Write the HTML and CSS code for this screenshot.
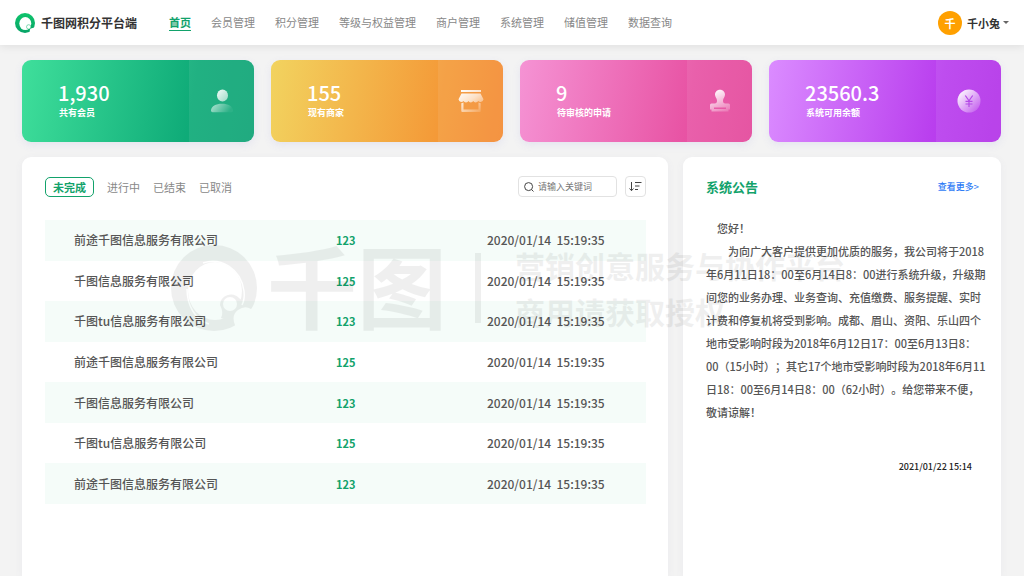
FILE: index.html
```html
<!DOCTYPE html>
<html lang="zh-CN">
<head>
<meta charset="utf-8">
<meta name="viewport" content="width=device-width, initial-scale=1">
<title>千图网积分平台端</title>
<link rel="stylesheet" href="styles.css">
</head>
<body>
<header class="topbar">
  <a class="brand" href="#">
    <svg class="brand-logo" viewBox="0 0 20 20" aria-hidden="true">
      <defs><linearGradient id="logo" x1="0" y1="0" x2="0" y2="1"><stop offset="0" stop-color="#0fc46c"/><stop offset="1" stop-color="#07a367"/></linearGradient></defs>
      <circle cx="10" cy="10" r="10" fill="url(#logo)"/>
      <ellipse cx="10.300" cy="10.600" rx="6" ry="6.500" fill="#fff"/>
      <circle cx="13.700" cy="13.900" r="2.200" fill="#fff" stroke="#0ab269" stroke-width=".5"/>
      <path d="M14.800 20V17Q14.800 15.800 16.500 15.300L20 14.600V20Z" fill="#fff"/>
    </svg>
    <span>千图网积分平台端</span>
  </a>
  <nav class="nav">
    <a class="nav-link active" href="#">首页</a>
    <a class="nav-link" href="#">会员管理</a>
    <a class="nav-link" href="#">积分管理</a>
    <a class="nav-link" href="#">等级与权益管理</a>
    <a class="nav-link" href="#">商户管理</a>
    <a class="nav-link" href="#">系统管理</a>
    <a class="nav-link" href="#">储值管理</a>
    <a class="nav-link" href="#">数据查询</a>
  </nav>
  <button class="user" type="button">
    <span class="avatar">千</span>
    <span>千小兔</span>
    <svg class="caret" viewBox="0 0 6 3" aria-hidden="true"><path d="M0 0H6L3 3Z" fill="#666"/></svg>
  </button>
</header>

<main class="page">
  <section class="stats">
    <article class="stat green">
      <div class="stat-text"><strong>1,930</strong><span>共有会员</span></div>
      <div class="stat-side">
        <svg class="stat-icon" viewBox="0 0 24 24" aria-hidden="true">
          <defs>
            <linearGradient id="head" x1="0" y1="0" x2="1" y2="1"><stop offset="0" stop-color="#fff" stop-opacity=".95"/><stop offset="1" stop-color="#fff" stop-opacity=".55"/></linearGradient>
            <linearGradient id="torso" x1="0" y1="0" x2="1" y2=".3"><stop offset="0" stop-color="#fff" stop-opacity=".65"/><stop offset="1" stop-color="#fff" stop-opacity=".05"/></linearGradient>
          </defs>
          <ellipse cx="12.500" cy="6.500" rx="5.500" ry="6" fill="url(#head)"/>
          <path d="M1 21.500C1 17.500 6 14.800 12 14.800S23 17.500 23 21.500Q23 23.300 21.500 23.300H2.500Q1 23.300 1 21.500Z" fill="url(#torso)"/>
        </svg>
      </div>
    </article>
    <article class="stat orange">
      <div class="stat-text"><strong>155</strong><span>现有商家</span></div>
      <div class="stat-side">
        <svg class="stat-icon wide" viewBox="0 0 26 24" aria-hidden="true">
          <defs><linearGradient id="shop" gradientUnits="userSpaceOnUse" x1="3" y1="0" x2="20" y2="24"><stop offset="0" stop-color="#fff"/><stop offset=".5" stop-color="#fff" stop-opacity=".7"/><stop offset="1" stop-color="#fff" stop-opacity=".15"/></linearGradient></defs>
          <g fill="url(#shop)">
            <rect x="3" y="1" width="20" height="2"/>
            <path d="M3.500 4.500H22.500L25.500 10.200Q25 13 22.800 13Q20.800 13 20.300 12Q19.500 13.400 17.600 13.400Q15.800 13.400 15.300 12Q14.500 13.400 12.800 13.400Q11 13.400 10.500 12Q9.800 13.400 8 13.400Q6.200 13.400 5.500 12Q5 13 3 13Q1 13 .500 10.200Z"/>
            <path d="M3.300 14.200L5.500 13.600V20.500H20.500V13.600L22.700 14.200V22Q22.700 23 21.700 23H4.300Q3.300 23 3.300 22Z"/>
          </g>
        </svg>
      </div>
    </article>
    <article class="stat pink">
      <div class="stat-text"><strong>9</strong><span>待审核的申请</span></div>
      <div class="stat-side">
        <svg class="stat-icon" viewBox="0 0 24 24" aria-hidden="true">
          <defs><linearGradient id="stamp" gradientUnits="userSpaceOnUse" x1="8" y1="0" x2="19" y2="24"><stop offset="0" stop-color="#fff"/><stop offset="1" stop-color="#fff" stop-opacity=".15"/></linearGradient></defs>
          <path fill="url(#stamp)" fill-rule="evenodd" d="M12 .800C15 .800 17 3 17 5.800C17 8.200 15 9.300 15 11.800C15 13.800 15.800 14.500 17.200 14.500H20.500Q22 14.500 22 16V20.500H20.500V22.500H3.500V20.500H2V16Q2 14.500 3.500 14.500H6.800C8.200 14.500 9 13.800 9 11.800C9 9.300 7 8.200 7 5.800C7 3 9 .800 12 .800ZM6 18.500V20H18V18.500Z"/>
        </svg>
      </div>
    </article>
    <article class="stat purple">
      <div class="stat-text"><strong>23560.3</strong><span>系统可用余额</span></div>
      <div class="stat-side">
        <svg class="stat-icon" viewBox="0 0 24 24" aria-hidden="true">
          <defs><linearGradient id="coin" x1="0" y1="0" x2="1" y2="1"><stop offset=".1" stop-color="#fff" stop-opacity=".95"/><stop offset=".9" stop-color="#fff" stop-opacity=".15"/></linearGradient></defs>
          <circle cx="12" cy="12" r="11.500" fill="url(#coin)"/>
          <path d="M8.300 6.500L12 11.800L15.700 6.500M12 11.800V18M8.500 12.300H15.500M8.500 15H15.500" fill="none" stroke="#b44be6" stroke-width="1.200"/>
        </svg>
      </div>
    </article>
  </section>

  <div class="columns">
    <section class="panel orders">
      <div class="toolbar">
        <div class="tabs">
          <button class="tab active" type="button">未完成</button>
          <button class="tab" type="button">进行中</button>
          <button class="tab" type="button">已结束</button>
          <button class="tab" type="button">已取消</button>
        </div>
        <label class="search">
          <svg class="search-icon" viewBox="0 0 10 10" aria-hidden="true"><circle cx="4.600" cy="4.600" r="4" fill="none" stroke="#444"/><path d="M7.500 7.500L9.500 9.500" stroke="#444"/></svg>
          <input class="search-input" type="search" placeholder="请输入关键词" aria-label="请输入关键词">
        </label>
        <button class="sort" type="button" aria-label="排序">
          <svg class="sort-icon" viewBox="0 0 13 11" aria-hidden="true"><path d="M2.500 1V9.500M.500 7.500L2.500 9.700L4.500 7.500M6 1.500H12.500M6 5H10.500M6 8.500H9" fill="none" stroke="#444"/></svg>
        </button>
      </div>
      <table class="list">
        <tbody>
          <tr><td class="company">前途千图信息服务有限公司</td><td class="count">123</td><td class="time">2020/01/14  15:19:35</td></tr>
          <tr><td class="company">千图信息服务有限公司</td><td class="count">125</td><td class="time">2020/01/14  15:19:35</td></tr>
          <tr><td class="company">千图tu信息服务有限公司</td><td class="count">123</td><td class="time">2020/01/14  15:19:35</td></tr>
          <tr><td class="company">前途千图信息服务有限公司</td><td class="count">125</td><td class="time">2020/01/14  15:19:35</td></tr>
          <tr><td class="company">千图信息服务有限公司</td><td class="count">123</td><td class="time">2020/01/14  15:19:35</td></tr>
          <tr><td class="company">千图tu信息服务有限公司</td><td class="count">125</td><td class="time">2020/01/14  15:19:35</td></tr>
          <tr><td class="company">前途千图信息服务有限公司</td><td class="count">123</td><td class="time">2020/01/14  15:19:35</td></tr>
        </tbody>
      </table>
    </section>

    <aside class="panel notice">
      <div class="notice-head">
        <h2>系统公告</h2>
        <a class="more" href="#">查看更多&gt;</a>
      </div>
      <div class="notice-body">
        <p class="greeting">您好！</p>
        <p class="message">为向广大客户提供更加优质的服务，我公司将于2018<br>年6月11日18：00至6月14日8：00进行系统升级，升级期<br>间您的业务办理、业务查询、充值缴费、服务提醒、实时<br>计费和停复机将受到影响。成都、眉山、资阳、乐山四个<br>地市受影响时段为2018年6月12日17：00至6月13日8：<br>00（15小时）；其它17个地市受影响时段为2018年6月11<br>日18：00至6月14日8：00（62小时）。给您带来不便，<br>敬请谅解！</p>
      </div>
      <time class="notice-time" datetime="2021-01-22T15:14">2021/01/22 15:14</time>
    </aside>
  </div>
</main>

<div class="watermark" aria-hidden="true">
  <svg class="wm-logo" viewBox="0 0 86 86">
    <circle cx="43" cy="43" r="43" fill="#000"/>
    <ellipse cx="44" cy="46" rx="27" ry="29" fill="#fff"/>
    <path d="M49 60A11 11 0 0 1 68 53L76 60L60 76L50 73Q53 68 49 60Z" fill="#000"/>
    <circle cx="59" cy="59" r="7" fill="#fff"/>
    <path d="M64 86V80Q60 70 67 65Q74 60 80 64L86 60V86Z" fill="#fff"/>
    <path d="M32 18C50 12 70 24 73 46Q74 54 71 60M16 44C16 60 24 75 38 79" fill="none" stroke="#fff" stroke-width="1.500"/>
  </svg>
  <span class="wm-name">千图</span>
  <span class="wm-bar"></span>
  <span class="wm-text">营销创意服务与协作平台<br>商用请获取授权</span>
</div>
</body>
</html>
```

FILE: styles.css
```css
* {
  box-sizing: border-box;
}

body {
  display: flex;
  flex-direction: column;
  position: relative;
  min-height: 100vh;
  margin: 0;
  background: #f3f3f3;
  color: #333;
  font-family: "Noto Sans CJK SC", sans-serif;
  font-size: 11px;
  line-height: 16px;
}

a {
  color: inherit;
  text-decoration: none;
}

button,
input {
  margin: 0;
  padding: 0;
  border: 0;
  background: none;
  color: inherit;
  font: inherit;
}

button {
  cursor: pointer;
}

h2,
p {
  margin: 0;
}

svg {
  display: block;
  flex: none;
}

/* Top bar */
.topbar {
  display: flex;
  align-items: center;
  height: 45px;
  padding: 0 15px;
  background: #fff;
  box-shadow: 0 2px 8px rgba(0, 0, 0, 0.08);
}

.brand {
  display: flex;
  align-items: center;
  gap: 6px;
  margin-right: 32px;
  font-size: 12px;
  font-weight: 700;
  color: #333;
  white-space: nowrap;
}

.brand-logo {
  width: 20px;
  height: 20px;
}

.nav {
  display: flex;
  gap: 20px;
  white-space: nowrap;
}

.nav-link {
  border-bottom: 1px solid transparent;
  color: #888;
}

.nav-link.active {
  border-color: #12a26b;
  color: #12a26b;
  font-weight: 700;
}

.user {
  display: flex;
  align-items: center;
  gap: 5px;
  margin-left: auto;
  font-weight: 700;
  color: #333;
  white-space: nowrap;
}

.avatar {
  width: 24px;
  height: 24px;
  border-radius: 50%;
  background: #ffa000;
  color: #fff;
  line-height: 24px;
  text-align: center;
}

.caret {
  width: 6px;
  height: 3px;
  margin-left: -2px;
}

/* Page */
.page {
  display: flex;
  flex: 1;
  flex-direction: column;
  gap: 15px;
  padding: 15px 23px 0 22px;
}

.stats {
  display: grid;
  grid-template-columns: repeat(4, 1fr);
  gap: 17px;
}

.stat {
  display: flex;
  min-height: 82px;
  overflow: hidden;
  border-radius: 9px;
  color: #fff;
  box-shadow: 0 3px 8px rgba(110, 110, 220, 0.1);
}

.green {
  background: linear-gradient(100deg, #3fdf9b, #0fab78 72%, #0fa376);
}

.orange {
  background: linear-gradient(100deg, #f2d35f, #f49a38 72%, #f38a32);
}

.pink {
  background: linear-gradient(100deg, #f593d4, #e853a4 72%, #e3479b);
}

.purple {
  background: linear-gradient(100deg, #db8cff, #b93eee 72%, #b332e8);
}

.stat-text {
  display: flex;
  flex: 1;
  flex-direction: column;
  justify-content: center;
  padding-left: 36px;
}

.stat-text strong {
  font-size: 20px;
  font-weight: 500;
  line-height: 24px;
}

.stat-text span {
  padding-left: 1px;
  font-size: 9px;
  font-weight: 700;
}

.stat-side {
  display: flex;
  flex: 0 0 28%;
  align-items: center;
  justify-content: center;
  background: rgba(255, 255, 255, 0.08);
}

.stat-icon {
  width: 24px;
  height: 24px;
}

.stat-icon.wide {
  width: 26px;
}

.columns {
  display: grid;
  flex: 1;
  grid-template-columns: minmax(0, 646fr) minmax(0, 318fr);
  gap: 15px;
}

.panel {
  border-radius: 9px 9px 0 0;
  background: #fff;
  box-shadow: 0 2px 8px rgba(110, 110, 160, 0.06);
}

/* Orders */
.orders {
  padding: 19px 22px 19px 23px;
}

.toolbar {
  display: flex;
  align-items: center;
  gap: 8px;
}

.tabs {
  display: flex;
  align-items: center;
  gap: 13px;
  margin-right: auto;
}

.tab {
  color: #888;
}

.tab.active {
  padding: 1px 7px;
  border: 1px solid #12a26b;
  border-radius: 5px;
  color: #12a26b;
  font-weight: 700;
}

.search {
  display: flex;
  align-items: center;
  gap: 4px;
  width: 99px;
  height: 21px;
  padding: 0 5px;
  border: 1px solid #e2e2e2;
  border-radius: 4px;
}

.search-icon {
  width: 10px;
  height: 10px;
}

.search-input {
  flex: 1;
  min-width: 0;
  outline: 0;
  font-size: 9px;
}

.search-input::placeholder {
  color: #777;
  opacity: 1;
}

.sort {
  display: grid;
  width: 21px;
  height: 21px;
  place-items: center;
  border: 1px solid #e2e2e2;
  border-radius: 4px;
}

.sort-icon {
  width: 13px;
  height: 11px;
}

.list {
  width: 100%;
  height: 284px;
  margin-top: 23px;
  border-collapse: collapse;
  table-layout: fixed;
  color: #555;
  font-size: 12px;
  font-weight: 500;
}

.list td {
  padding: 0;
}

.list tr:nth-child(odd) {
  background: #f5fcf9;
}

.list .company {
  width: 291px;
  padding-left: 29px;
}

.list .count {
  width: 151px;
  color: #12a26b;
  font-size: 11px;
  font-weight: 700;
}

.list .time {
  white-space: pre;
}

/* Notice */
.notice {
  padding: 20px 22px 20px 23px;
}

.notice-head {
  display: flex;
  align-items: center;
  justify-content: space-between;
  height: 20px;
}

.notice-head h2 {
  color: #12a26b;
  font-size: 13px;
  font-weight: 700;
}

.more {
  color: #2f7cf6;
  font-size: 9px;
  font-weight: 500;
}

.notice-body {
  margin-top: 20px;
  color: #555;
  font-weight: 500;
  line-height: 23px;
  text-spacing-trim: space-all;
  white-space: nowrap;
}

.greeting {
  text-indent: 11px;
}

.message {
  text-indent: 22px;
}

.notice-time {
  display: block;
  margin-top: 35px;
  padding-right: 7px;
  font-size: 9px;
  font-weight: 500;
  color: #222;
  text-align: right;
}

/* Watermark laid over the page */
.watermark {
  display: flex;
  position: absolute;
  top: 243px;
  left: 171px;
  align-items: center;
  height: 90px;
  opacity: 0.06;
  pointer-events: none;
  color: #000;
  white-space: nowrap;
}

.wm-logo {
  width: 86px;
  height: 86px;
}

.wm-name {
  margin-left: 10px;
  padding-bottom: 10px;
  font-size: 90px;
  font-weight: 700;
  line-height: 90px;
}

.wm-bar {
  width: 6px;
  height: 70px;
  margin: 0 34px 0 28px;
  background: #000;
}

.wm-text {
  font-size: 30px;
  font-weight: 700;
  line-height: 46px;
}
```
